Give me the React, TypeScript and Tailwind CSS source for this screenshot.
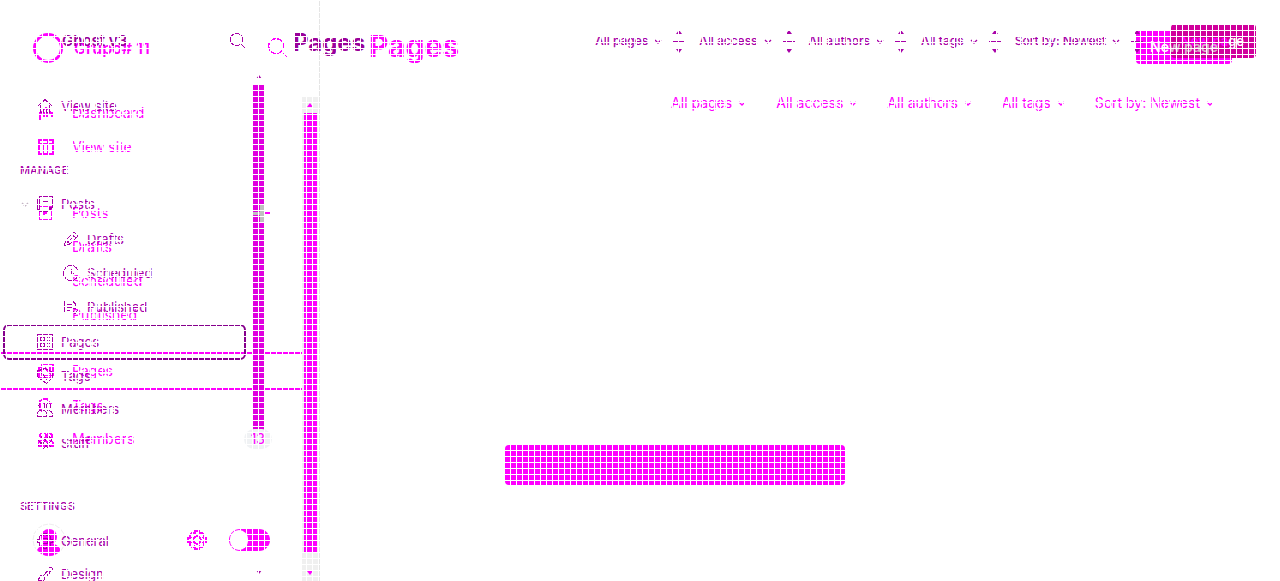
import React, { type ReactNode } from "react";

const A = "text-[#a800a8]";
const B = "text-[#ff00ff]";

function Svg({ children, size = 16, bold = false }: { children: ReactNode; size?: number; bold?: boolean }) {
  return (
    <svg width={size} height={size} viewBox="0 0 16 16" fill="none" stroke="currentColor" strokeWidth={bold ? 1.6 : 1} shapeRendering="crispEdges" className="shrink-0" aria-hidden="true">
      {children}
    </svg>
  );
}

const icons = {
  home: <path d="M1 8 8 1.5 15 8M3.5 6.5V14.5H6.5V10H9.5V14.5H12.5V6.5" />,
  dashboard: <path d="M2 15V8H6V12M9 12V8H14V12M2 8 8 3 14 8" />,
  browser: <path d="M1 1H15V15H1ZM1 5H15M5 5V15M10 1V15" />,
  posts: <path d="M2.5 .5H15.5V11L12 15H2.5V.5ZM.5 3V13L2.5 15M6 5.5H12M6 8.5H12M12 15V11H15" />,
  postsB: <path d="M1.500 1.500H13.500V14.500H1.500ZM6 10 12 3M5 8H9M6 10V7" />,
  pencil: <path d="M1 15 3 9 11 1 15 5 7 13ZM9 3 13 7M3 9 7 13M6 10 11 5M4 12 8 8" />,
  clock: <path d="M8 .5A7.500 7.500 0 1 1 8 15.500 7.500 7.500 0 0 1 8 .5ZM8 4V8H11" />,
  published: <path d="M8 13.500H1.500V1.500H9L12.500 5V7M4 5.500H9M4 8.500H9M4 11.500H7M10 12 12 15 15.500 10M10 9H13" />,
  pages: <path d="M.5 .5H15.500V15.500H.5ZM3.500 3.500H7V6.500H3.500ZM9.500 3.500H13M9.500 6.500H13M3.500 9.500H7V12.500H3.500ZM9.500 9.500H13M9.500 12.500H13" />,
  pagesB: <path d="M3.500 1.500H15V12.500H3.500ZM3 4H1V15H12.500V13M7 5 12 10V4" />,
  tagA: <path d="M.5 3 8 .5 15 4V10L9.500 15.500 1 9ZM4 4 10 12M11 4V8" />,
  tagB: <path d="M2 6V3L5 1H9L13 6M2 6V11L5 14M5 5H6" />,
  members: <path d="M5 1.500A3 3 0 1 1 5 7.500 3 3 0 0 1 5 1.500M11.500 2.500A2.500 2.500 0 1 1 11.500 7.500 2.500 2.500 0 0 1 11.500 2.500M.5 15V12Q1 9.500 5 9.500T9.500 12V15ZM10 9.500Q15.500 9 15.500 15H11" />,
  staff: <path d="M4 1.500 8 5 12 1.500 15 5 9 11 5 15M1 5 5 9 9 5M1 11 5 7 11 13M10 8 14 12" />,
  gear: <path d="M6.500 .5H9.500L10 3 12 2 14 4 13 6 15.500 6.500V9.500L13 10 14 12 12 14 10 13 9.500 15.500H6.500L6 13 4 14 2 12 3 10 .5 9.500V6.500L3 6 2 4 4 2 6 3ZM8 5A3 3 0 1 1 8 11 3 3 0 0 1 8 5Z" />,
  design: <path d="M1 15 3 10 6 9 8 11 7 14ZM7 9 12 3M9 11 14 5M11 3 13 1 15 2 15 4 13 6Z" />,
  search: <path d="M6.500 .5A6 6 0 1 1 6.500 12.500 6 6 0 0 1 6.500 .5M11 11 15.500 15.500" />,
};

function Chevron({ className = "" }: { className?: string }) {
  return (
    <svg width="8" height="5" viewBox="0 0 8 5" fill="none" stroke="currentColor" strokeWidth="1.300" className={"shrink-0 " + className} aria-hidden="true">
      <path d="M1 1 4 4 7 1" />
    </svg>
  );
}

function Triangle({ down = false }: { down?: boolean }) {
  return (
    <svg width="8" height="4" viewBox="0 0 8 4" fill="currentColor" className="shrink-0" aria-hidden="true">
      <path d={down ? "M1 0H7L4 4Z" : "M1 4H7L4 0Z"} />
    </svg>
  );
}

function Row({ icon, label, className = "", gap = "gap-2" }: { icon: ReactNode; label: string; className?: string; gap?: string }) {
  return (
    <a href="#" className={"flex items-center " + gap + " " + className}>
      {icon}
      <span>{label}</span>
    </a>
  );
}

function Splitter() {
  return (
    <span className="flex flex-col items-center gap-[7px]">
      <Triangle />
      <i className="h-px w-3 bg-current" />
      <Triangle down />
    </span>
  );
}

const filters = ["All pages", "All access", "All authors", "All tags", "Sort by: Newest"];

function PurpleLayer() {
  return (
    <div className={"col-start-1 row-start-1 flex min-w-0 text-[13px] leading-5 " + A}>
      <aside className="flex w-[250px] shrink-0 flex-col">
        <header className="flex items-center justify-between pt-[31px] pr-1 pl-[62px]">
          <strong className="text-[15px] font-semibold text-[#9a009a]">Ghost v3</strong>
          <button aria-label="Search"><Svg>{icons.search}</Svg></button>
        </header>
        <nav className="flex flex-col">
          <Row className="mt-[39px] h-8 pl-[37px]" icon={<Svg>{icons.home}</Svg>} label="View site" />
          <h2 className="mt-[38px] pl-5 text-[11px] font-medium">MANAGE</h2>
          <div className="mt-[7px] flex h-[34px] items-center pl-[21px]">
            <Chevron className="text-[#c4b4c4]" />
            <Row className="pl-2" icon={<Svg>{icons.posts}</Svg>} label="Posts" />
          </div>
          <Row className="mt-px h-[34px] pl-[63px]" icon={<Svg>{icons.pencil}</Svg>} label="Drafts" />
          <Row className="h-[34px] pl-[63px]" icon={<Svg>{icons.clock}</Svg>} label="Scheduled" />
          <Row className="h-[34px] pl-[63px]" icon={<Svg>{icons.published}</Svg>} label="Published" />
          <Row className="mr-1 ml-[3px] h-9 rounded-md border-2 border-[#85008c] pl-8" icon={<Svg>{icons.pages}</Svg>} label="Pages" />
          <Row className="h-8 pl-[37px]" icon={<Svg>{icons.tagA}</Svg>} label="Tags" />
          <Row className="h-[34px] pl-[37px]" icon={<Svg>{icons.members}</Svg>} label="Members" />
          <Row className="h-[34px] pl-[37px]" icon={<Svg>{icons.staff}</Svg>} label="Staff" />
          <h2 className="mt-9 pl-5 text-[11px] font-medium">SETTINGS</h2>
          <Row className="mt-2 h-[34px] pl-[37px]" icon={<Svg>{icons.gear}</Svg>} label="General" />
          <Row className="h-8 pl-[37px]" icon={<Svg>{icons.design}</Svg>} label="Design" />
        </nav>
      </aside>
      <div className="flex w-[17px] shrink-0 flex-col items-center pt-[75px] pb-4">
        <Triangle />
        <div className="mt-[5px] mb-auto h-[348px] w-3 bg-[#e000e0]" />
        <Triangle down />
      </div>
      <header className="flex h-[66px] min-w-0 grow items-center justify-between pt-4 pr-6 pl-[26px]">
        <h1 className="pt-1 text-[24px] leading-8 font-bold text-[#9a009a]">Pages</h1>
        <div className="flex items-center text-[12px] font-medium">
          {filters.map((f) => (
            <div key={f} className="flex items-center">
              <button className="flex items-center gap-1.5 whitespace-nowrap">{f}<Chevron /></button>
              <span className="pr-[14px] pl-[11px]"><Splitter /></span>
            </div>
          ))}
          <button className="ml-[14px] h-[34px] w-[85px] rounded bg-[#d0009c] pr-3 text-right text-[13px] font-semibold whitespace-nowrap text-white">
            <span className="text-[#ff00ff]">New pa</span>ge
          </button>
        </div>
      </header>
    </div>
  );
}

function MagentaLayer() {
  return (
    <div className={"col-start-1 row-start-1 flex min-w-0 text-[14px] leading-5 " + B}>
      <aside className="flex w-[302px] shrink-0 flex-col">
        <header className="flex items-center pt-[33px] pr-[14px] pl-[33px]">
          <i className="h-[30px] w-[30px] rounded-full border-[3px] border-current" />
          <strong className="ml-[11px] grow text-[16px] font-semibold">Grupo# 11</strong>
          <button aria-label="Search"><Svg size={20}>{icons.search}</Svg></button>
        </header>
        <nav className="flex flex-col">
          <Row gap="gap-[18px]" className="mt-[33px] h-[34px] pl-[38px]" icon={<Svg bold>{icons.dashboard}</Svg>} label="Dashboard" />
          <Row gap="gap-[18px]" className="h-[34px] pl-[38px]" icon={<Svg bold>{icons.browser}</Svg>} label="View site" />
          <div className="mt-8 flex h-[34px] items-center justify-between pr-8">
            <Row gap="gap-[18px]" className="pl-[38px]" icon={<Svg bold>{icons.postsB}</Svg>} label="Posts" />
            <button aria-label="New post" className="relative z-10">
              <svg width="17" height="18" viewBox="0 0 17 18" className="block" aria-hidden="true">
                <path d="M0 8H10V11H0ZM7 0H11V18H7Z" fill="#c0c0c0" />
                <path d="M11 8H17V10H11Z" fill="currentColor" />
              </svg>
            </button>
          </div>
          <a href="#" className="flex h-[34px] items-center pl-[72px]">Drafts</a>
          <a href="#" className="flex h-[34px] items-center pl-[72px]">Scheduled</a>
          <a href="#" className="flex h-[34px] items-center pl-[72px]">Published</a>
          <Row gap="gap-[18px]" className="mt-5 h-[38px] border-y-2 border-current pl-[38px]" icon={<Svg bold>{icons.pagesB}</Svg>} label="Pages" />
          <Row gap="gap-[18px]" className="h-8 pl-[38px]" icon={<Svg bold>{icons.tagB}</Svg>} label="Tags" />
          <div className="flex h-[34px] items-center justify-between pr-[30px]">
            <Row gap="gap-[18px]" className="pl-[38px]" icon={<Svg bold>{icons.members}</Svg>} label="Members" />
            <span className="relative z-10 rounded-full bg-[#f0f2f4] px-[7px]">13</span>
          </div>
        </nav>
        <footer className="mt-[67px] flex items-center pr-8 pl-8">
          <svg width="34" height="34" viewBox="0 0 34 34" aria-hidden="true">
            <circle cx="17" cy="17" r="16" fill="none" stroke="#eeeeee" />
            <circle cx="17" cy="14" r="8" fill="currentColor" />
            <path d="M5 27Q8 22 12 21H22Q26 22 29 27Q24 33 17 33T5 27Z" fill="currentColor" />
          </svg>
          <button aria-label="Settings" className="mr-[22px] ml-auto"><Svg size={20} bold>{icons.gear}</Svg></button>
          <button role="switch" aria-checked="false" aria-label="Night mode" className="flex h-[22px] w-[41px] items-center rounded-full bg-[#ff00ff] pl-px">
            <i className="h-5 w-[18px] rounded-full bg-white" />
          </button>
        </footer>
      </aside>
      <div className="flex w-[18px] shrink-0 border-r border-[#e5e5e5]">
        <div className="mt-[97px] flex w-4 flex-col items-center bg-[#f0f0f0] pt-1.5">
          <Triangle />
          <div className="mt-1.5 h-[440px] w-[13px] bg-current" />
          <span className="mt-[18px]"><Triangle down /></span>
        </div>
      </div>
      <main className="flex min-w-0 grow flex-col">
        <header className="flex items-start justify-between pt-[30px] pr-12 pl-[49px]">
          <h1 className="text-[30px] leading-8 font-bold">Pages</h1>
          <button className="h-[34px] w-24 rounded bg-[#ff00ff] font-semibold whitespace-nowrap text-white">
            <span className="relative z-10">Ne<span className="text-[#d8b4cc]">w page</span></span>
          </button>
        </header>
        <div className="mt-[29px] flex justify-end gap-[30px] pr-[66px]">
          {filters.map((f) => (
            <button key={f} className="flex items-center gap-1.5 whitespace-nowrap">{f}<Chevron /></button>
          ))}
        </div>
        <div className="mt-[332px] ml-[185px] h-10 w-[340px] rounded bg-[#ff00ff]" />
      </main>
    </div>
  );
}

export default function App() {
  return (
    <div className="relative grid min-h-screen grid-cols-1 overflow-hidden bg-white font-['Inter','Liberation_Sans',sans-serif]">
      <MagentaLayer />
      <PurpleLayer />
      <div className="pointer-events-none absolute inset-0 z-20 bg-[linear-gradient(to_right,#fff_1px,transparent_1px),linear-gradient(to_bottom,#fff_1px,transparent_1px)] bg-[size:6px_6px]" />
    </div>
  );
}
